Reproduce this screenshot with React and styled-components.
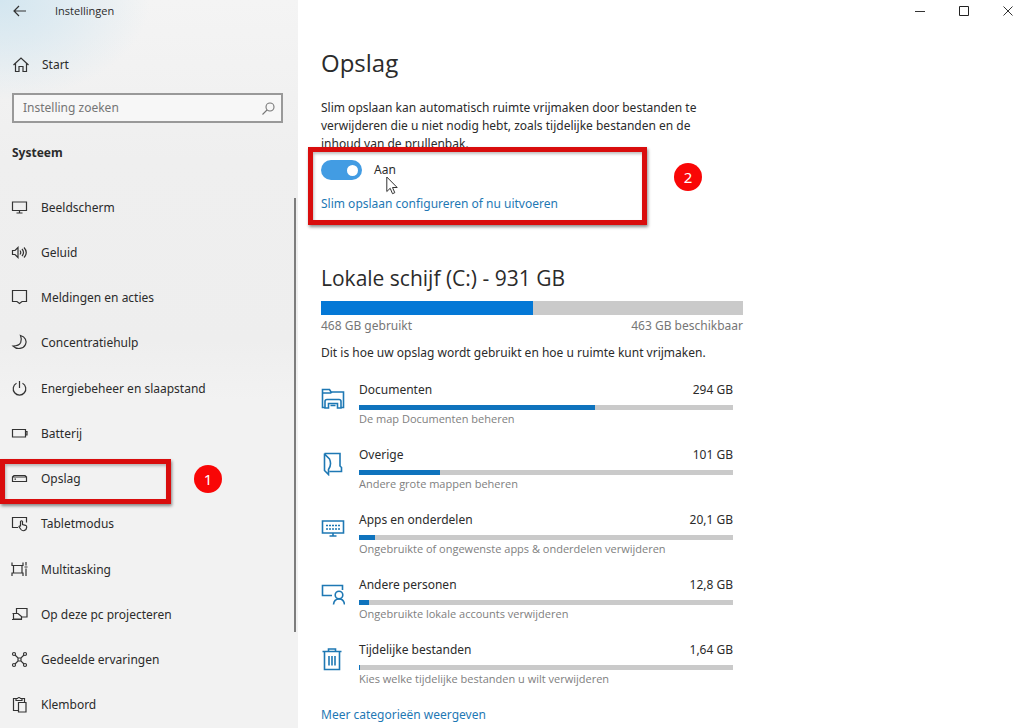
import React, { useState } from 'react';
import styled, { createGlobalStyle, css } from 'styled-components';

const GlobalStyle = createGlobalStyle`
  * {
    box-sizing: border-box;
  }

  body {
    margin: 0;
    background: #ffffff;
    color: #2b2b2b;
    font-family: 'Noto Sans', 'Open Sans', sans-serif;
    font-size: 12px;
    line-height: 18px;
  }

  button, input {
    font: inherit;
    color: inherit;
  }
`;

const Window = styled.div`
  display: grid;
  grid-template-columns: 298px 1fr;
  min-height: 100vh;
`;

/* ---------- sidebar ---------- */

const Sidebar = styled.aside`
  display: flex;
  flex-direction: column;
  background:
    radial-gradient(ellipse 150px 100px at 0 0, #d3e6f0 0%, rgba(211, 230, 240, 0.6) 45%, rgba(242, 242, 242, 0) 100%),
    linear-gradient(#f4f4f4 0, #efefef 160px, #eeeeee 340px, #f2f2f2 400px);
`;

const TitleBar = styled.header`
  display: flex;
  align-items: center;
  height: 22px;
  font-family: 'Open Sans', sans-serif;
  font-size: 11px;
`;

const IconButton = styled.button`
  display: flex;
  align-items: center;
  justify-content: center;
  width: ${({ $width }) => $width || 32}px;
  height: 22px;
  padding: 0;
  border: none;
  background: none;
`;

const WindowTitle = styled.span`
  margin-left: 15px;
`;

const HomeLink = styled.a`
  display: flex;
  align-items: center;
  gap: 12px;
  height: 32px;
  margin-top: 27px;
  padding-left: 12px;
  color: inherit;
  text-decoration: none;
`;

const SearchBox = styled.label`
  display: flex;
  align-items: center;
  height: 30px;
  margin: 12px 15px 0 12px;
  padding: 0 6px 0 9px;
  border: 2px solid #999999;
  background: #f7f7f7;
`;

const SearchInput = styled.input`
  flex: 1;
  min-width: 0;
  padding: 0;
  border: none;
  outline: none;
  background: none;

  &::placeholder {
    color: #757575;
    opacity: 1;
  }
`;

const SectionTitle = styled.h2`
  margin: 21px 0 0 12px;
  font-size: 12px;
  line-height: 18px;
  font-weight: 700;
`;

const NavArea = styled.nav`
  display: flex;
  flex: 1;
  margin-top: 23px;
`;

const NavList = styled.ul`
  display: flex;
  flex: 1;
  flex-direction: column;
  margin: 0;
  padding: 0;
  list-style: none;
`;

const NavItem = styled.li`
  position: relative;
  display: flex;
  flex: 1;
  min-height: 40px;
`;

const NavLink = styled.a`
  display: flex;
  flex: 1;
  align-items: center;
  gap: 12px;
  padding-left: 11px;
  color: inherit;
  text-decoration: none;
`;

const ScrollThumb = styled.div`
  width: 2px;
  height: 80%;
  margin: 13px 2px 0 0;
  background: #7d7d7d;
`;

/* ---------- red marks ---------- */

const Frame = styled.div`
  position: absolute;
  border: 5px solid #d90d0d;
  box-shadow: 1px 2px 3px rgba(0, 0, 0, 0.45), inset 1px 2px 3px rgba(0, 0, 0, 0.25);
  pointer-events: none;
  ${({ $place }) =>
    $place === 'nav'
      ? css`
          inset: 2px auto -2px 0;
          width: 171px;
        `
      : css`
          inset: -6px 96px -6px -13px;
        `}
`;

const Badge = styled.span`
  position: absolute;
  top: ${({ $top }) => $top}px;
  left: ${({ $left }) => $left}px;
  display: flex;
  align-items: center;
  justify-content: center;
  width: 28px;
  height: 28px;
  border-radius: 50%;
  background: #f90606;
  color: #ffffff;
  font-size: 15px;
`;

/* ---------- main column ---------- */

const Main = styled.main`
  display: flex;
  flex-direction: column;
`;

const WindowControls = styled.div`
  display: flex;
  justify-content: flex-end;
  gap: 12px;
`;

const Content = styled.div`
  width: 100%;
  max-width: 467px;
  padding: 24px 22px 0 23px;
`;

const Title = styled.h1`
  margin: 0;
  font-family: 'Open Sans', sans-serif;
  font-size: 24px;
  line-height: 34px;
  font-weight: 400;
`;

const Intro = styled.p`
  max-width: 400px;
  margin: 19px 0 0;
`;

const SenseBlock = styled.section`
  position: relative;
  height: 66px;
`;

const SwitchRow = styled.label`
  display: flex;
  align-items: center;
  gap: 12px;
  padding-top: 7px;
`;

const Switch = styled.input`
  appearance: none;
  display: flex;
  align-items: center;
  justify-content: ${({ checked }) => (checked ? 'flex-end' : 'flex-start')};
  width: 41px;
  height: 20px;
  margin: 0;
  padding: 0 4px;
  border-radius: 10px;
  background: ${({ checked }) => (checked ? '#429ce3' : '#999999')};

  &::before {
    content: '';
    width: 11px;
    height: 11px;
    border-radius: 50%;
    background: #ffffff;
  }
`;

const Pointer = styled.svg`
  position: absolute;
  top: 23px;
  left: 65px;
`;

const TextLink = styled.a`
  display: block;
  margin-top: ${({ $gap }) => $gap}px;
  color: #1e78b4;
  text-decoration: none;
`;

const DriveTitle = styled.h2`
  margin: 43px 0 7px;
  font-family: 'Open Sans', sans-serif;
  font-size: 21px;
  line-height: 32px;
  font-weight: 400;
`;

const Track = styled.div`
  height: ${({ $height }) => $height}px;
  background: #cacaca;
`;

const Fill = styled.div`
  height: 100%;
  background: ${({ $color }) => $color || '#0f73bd'};
`;

const DriveLegend = styled.div`
  display: flex;
  justify-content: space-between;
  margin-top: 2px;
  color: #767676;
`;

const Hint = styled.p`
  margin: 9px 0 0;
`;

const CategoryList = styled.ul`
  display: flex;
  flex-direction: column;
  gap: 18px;
  margin: 19px 0 0;
  padding: 0 10px 0 0;
  list-style: none;
`;

const CategoryItem = styled.li`
  display: flex;
  gap: 14px;
`;

const CategoryIcon = styled.svg`
  flex: none;
  width: 24px;
  height: 24px;
  margin-top: 6px;
  fill: none;
  stroke: #1e78b4;
  stroke-width: 1.6;
`;

const CategoryBody = styled.div`
  flex: 1;
`;

const CategoryHead = styled.div`
  display: flex;
  justify-content: space-between;
  margin-bottom: 6px;
`;

const CategoryNote = styled.div`
  color: #808080;
  font-family: 'Open Sans', sans-serif;
  font-size: 11px;
`;

const NavSvg = styled.svg`
  flex: none;
  width: 18px;
  height: 18px;
  fill: none;
  stroke: #333333;
  stroke-width: 1.2;
`;

const navIcons = {
  display: <path d="M1.500 3h14v8.500h-14zM5.500 14h6M8.500 11.500v2.500" />,
  sound: (
    <path d="M1.500 6.500h2.500L7 3.500v10L4 10.500H1.500zM9 6.500q1.500 2 0 4M11 5q3 3.500 0 7M13 3.500q4.500 5 0 10" />
  ),
  message: <path d="M1.500 1.500h14v11h-4.500l-2.500 2-2.500-2H1.500z" />,
  moon: <path d="M9.500 1.500c5 1.500 6.500 5.500 5 9-2 4.500-8.500 5.500-12.500 1.500 4 0 6.500-1 7.700-3.500 1-2.300.8-4.500-.2-7z" />,
  power: <path d="M8.500 1v7M5.500 3.200a6.300 6.300 0 1 0 6 0" />,
  battery: <path d="M1.500 4.500h13v7.500h-13zM14.500 6.500h1.500v3.500h-1.500" />,
  storage: <path d="M1.500 7h14v4.500h-14zM1.500 7l1.500-1.500h11l1.500 1.500M3.500 9.200h1.500" />,
  tablet: (
    <path d="M7 12.500H1.500v-10h14v5M9.500 11.500V6.500q1-1.500 2 0v3l3 .8q1.500.5 1.200 2l-.7 2.200q-3 2.500-5 0L8 11.800q0-1.300 1.500-.5" />
  ),
  tasks: <path d="M1 1.500v3h11v-3M1 15v-3h11v3M2.500 4.500v7.500M11 4.500v7.500M15 1v3.500M15 7.500v7.500M13.500 6h3" />,
  project: <path d="M5.500 7V2.500h10.500v8.500h-5M1.500 7.500h5.500l3.500 3v2.500H2.500v-5.500M1 13.500h10" />,
  share: (
    <>
      <path d="M4 4l3 3h3l3-3M4 13l3-3h3l3 3M7 7v3M10 7v3" />
      <circle cx="3" cy="3" r="1.500" />
      <circle cx="14" cy="3" r="1.500" />
      <circle cx="3" cy="14" r="1.500" />
      <circle cx="14" cy="14" r="1.500" />
    </>
  ),
  clipboard: <path d="M7 14.500H2.500v-12h2.500M11 2.500h2.500v3.500M5 4.500v-2h1.500q1.500-2 3 0H11v2zM7.500 6.500h7.500v9.500H7.500z" />,
};

const categoryIcons = {
  documents: (
    <path d="M4 20.500H1.500V2.500h7l1.500 2.500h12.500v15.500h-2.500M1.500 6h8l1.500-1M4 21V14.500q0-2 2-2h12q2 0 2 2V21h-3.500v-4.500h-9V21zM9.500 18.500h5" />
  ),
  other: <path d="M3.500 1.500h15.500v12.500l1.500 1.500v4H8.500M3.500 1.500v17l4 4v-5q3.500-5 1-10.500L3.500 2" />,
  apps: (
    <>
      <path d="M1.500 4h21v12h-21zM8.500 19h7M12 16v3" />
      <path d="M5 8.500h14M5 12h14" strokeDasharray="2 1" />
    </>
  ),
  people: (
    <>
      <path d="M11 13.500H1.500v-10h20V8M12.500 22.500q.5-5.500 5.500-5.500t5.500 5.500" />
      <circle cx="18" cy="13" r="3.800" />
    </>
  ),
  trash: <path d="M1.500 4.500h19M7.500 4.500V2h7v2.500M3.500 4.500v18h15v-18M8 9v9.500M11 9v9.500M14 9v9.500" />,
};

const navItems = [
  { icon: 'display', label: 'Beeldscherm' },
  { icon: 'sound', label: 'Geluid' },
  { icon: 'message', label: 'Meldingen en acties' },
  { icon: 'moon', label: 'Concentratiehulp' },
  { icon: 'power', label: 'Energiebeheer en slaapstand' },
  { icon: 'battery', label: 'Batterij' },
  { icon: 'storage', label: 'Opslag', marked: true },
  { icon: 'tablet', label: 'Tabletmodus' },
  { icon: 'tasks', label: 'Multitasking' },
  { icon: 'project', label: 'Op deze pc projecteren' },
  { icon: 'share', label: 'Gedeelde ervaringen' },
  { icon: 'clipboard', label: 'Klembord' },
];

const categories = [
  { icon: 'documents', name: 'Documenten', size: '294 GB', used: 63, note: 'De map Documenten beheren' },
  { icon: 'other', name: 'Overige', size: '101 GB', used: 21.6, note: 'Andere grote mappen beheren' },
  {
    icon: 'apps',
    name: 'Apps en onderdelen',
    size: '20,1 GB',
    used: 4.3,
    note: 'Ongebruikte of ongewenste apps & onderdelen verwijderen',
  },
  { icon: 'people', name: 'Andere personen', size: '12,8 GB', used: 2.7, note: 'Ongebruikte lokale accounts verwijderen' },
  {
    icon: 'trash',
    name: 'Tijdelijke bestanden',
    size: '1,64 GB',
    used: 0.35,
    note: 'Kies welke tijdelijke bestanden u wilt verwijderen',
  },
];

const Bar = ({ value, height, color, label }) => (
  <Track $height={height} role="progressbar" aria-label={label} aria-valuenow={value}>
    <Fill $color={color} style={{ width: `${value}%` }} />
  </Track>
);

const App = () => {
  const [enabled, setEnabled] = useState(true);

  return (
    <>
      <GlobalStyle />
      <Window>
        <Sidebar>
          <TitleBar>
            <IconButton $width={40} aria-label="Terug">
              <svg width="14" height="12" viewBox="0 0 14 12" fill="none" stroke="#333" strokeWidth="1.2">
                <path d="M13 6H1.500M6 1L1 6l5 5" />
              </svg>
            </IconButton>
            <WindowTitle>Instellingen</WindowTitle>
          </TitleBar>
          <HomeLink href="#start">
            <NavSvg viewBox="0 0 18 18" aria-hidden="true">
              <path d="M1.500 9L9 2l7.500 7M3.500 7.500v8h3.500v-5h4v5h3.500v-8" />
            </NavSvg>
            Start
          </HomeLink>
          <SearchBox>
            <SearchInput type="text" placeholder="Instelling zoeken" aria-label="Instelling zoeken" />
            <svg width="13" height="13" viewBox="0 0 13 13" fill="none" stroke="#777" strokeWidth="1.1">
              <circle cx="8" cy="5" r="4" />
              <path d="M5 8l-4.500 4.500" />
            </svg>
          </SearchBox>
          <SectionTitle>Systeem</SectionTitle>
          <NavArea>
            <NavList>
              {navItems.map((item) => (
                <NavItem key={item.icon}>
                  <NavLink href={`#${item.icon}`}>
                    <NavSvg viewBox="0 0 18 18" aria-hidden="true">
                      {navIcons[item.icon]}
                    </NavSvg>
                    {item.label}
                  </NavLink>
                  {item.marked && (
                    <>
                      <Frame $place="nav" />
                      <Badge $top={8} $left={194}>1</Badge>
                    </>
                  )}
                </NavItem>
              ))}
            </NavList>
            <ScrollThumb />
          </NavArea>
        </Sidebar>

        <Main>
          <WindowControls>
            <IconButton aria-label="Minimaliseren">
              <svg width="10" height="10" viewBox="0 0 10 10" stroke="#333">
                <path d="M0 5.500h10" />
              </svg>
            </IconButton>
            <IconButton aria-label="Maximaliseren">
              <svg width="10" height="10" viewBox="0 0 10 10" fill="none" stroke="#222">
                <path d="M.5.500h9v9h-9z" />
              </svg>
            </IconButton>
            <IconButton aria-label="Sluiten">
              <svg width="10" height="10" viewBox="0 0 10 10" stroke="#333">
                <path d="M.5.500l9 9M9.500.500l-9 9" />
              </svg>
            </IconButton>
          </WindowControls>

          <Content>
            <Title>Opslag</Title>
            <Intro>
              Slim opslaan kan automatisch ruimte vrijmaken door bestanden te verwijderen die u niet nodig hebt, zoals
              tijdelijke bestanden en de inhoud van de prullenbak.
            </Intro>
            <SenseBlock>
              <SwitchRow>
                <Switch type="checkbox" role="switch" checked={enabled} onChange={() => setEnabled(!enabled)} />
                {enabled ? 'Aan' : 'Uit'}
              </SwitchRow>
              <TextLink href="#configureren" $gap={15}>
                Slim opslaan configureren of nu uitvoeren
              </TextLink>
              <Pointer width="12" height="19" viewBox="0 0 12 19" fill="#fff" stroke="#333" aria-hidden="true">
                <path d="M.8 1v14.500l3.400-3.200 2.300 5.400 2.300-1-2.300-5.200h4.700z" />
              </Pointer>
              <Frame $place="sense" />
              <Badge $top={10} $left={353}>2</Badge>
            </SenseBlock>

            <DriveTitle>Lokale schijf (C:) - 931 GB</DriveTitle>
            <Bar value={50.3} height={14} color="#0478d6" label="Lokale schijf" />
            <DriveLegend>
              <span>468 GB gebruikt</span>
              <span>463 GB beschikbaar</span>
            </DriveLegend>
            <Hint>Dit is hoe uw opslag wordt gebruikt en hoe u ruimte kunt vrijmaken.</Hint>

            <CategoryList>
              {categories.map((category) => (
                <CategoryItem key={category.icon}>
                  <CategoryIcon viewBox="0 0 24 24" aria-hidden="true">
                    {categoryIcons[category.icon]}
                  </CategoryIcon>
                  <CategoryBody>
                    <CategoryHead>
                      <span>{category.name}</span>
                      <span>{category.size}</span>
                    </CategoryHead>
                    <Bar value={category.used} height={5} label={category.name} />
                    <CategoryNote>{category.note}</CategoryNote>
                  </CategoryBody>
                </CategoryItem>
              ))}
            </CategoryList>
            <TextLink href="#meer" $gap={18}>
              Meer categorieën weergeven
            </TextLink>
          </Content>
        </Main>
      </Window>
    </>
  );
};

export default App;
